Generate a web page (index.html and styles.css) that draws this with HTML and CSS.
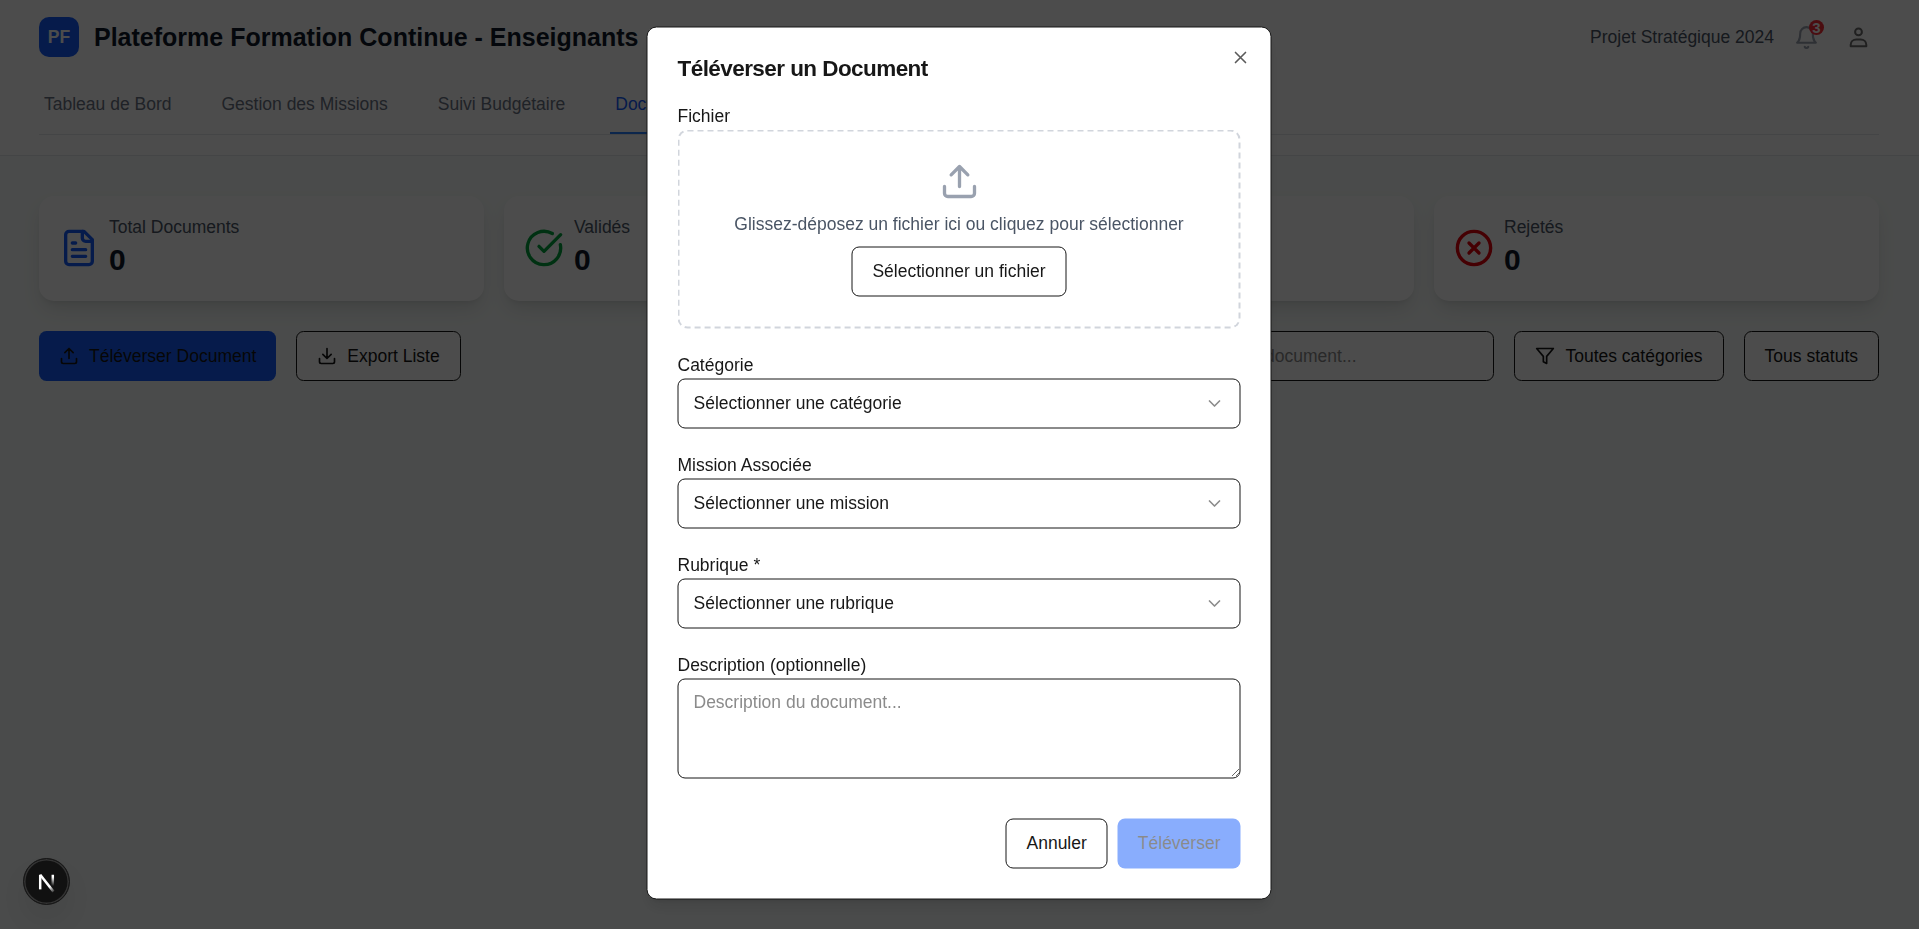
FILE: index.html
```
<!DOCTYPE html>
<html lang="fr">
<head>
<meta charset="utf-8">
<title>Plateforme Formation Continue - Enseignants</title>
<link rel="stylesheet" href="styles.css">
</head>
<body>
<header class="header">
  <div class="header-top">
    <div class="brand">
      <div class="logo">PF</div>
      <h1 class="brand-title">Plateforme Formation Continue - Enseignants</h1>
    </div>
    <div class="header-right">
      <span class="project">Projet Stratégique 2024</span>
      <div class="bell">
        <svg class="icon-md" viewBox="0 0 24 24"><path d="M6 8a6 6 0 0 1 12 0c0 7 3 9 3 9H3s3-2 3-9"/><path d="M10.3 21a1.94 1.94 0 0 0 3.4 0"/></svg>
        <span class="bell-count">3</span>
      </div>
      <div class="user">
        <svg class="icon-md" viewBox="0 0 25 25"><circle cx="12.5" cy="6.9" r="3.4"/><path d="M4.7 21.3v-1.6c0-3 2.5-5.3 5.6-5.3h4.4c3.1 0 5.6 2.3 5.6 5.3v1.6z"/></svg>
      </div>
    </div>
  </div>
  <nav class="tabs">
    <a class="tab">Tableau de Bord</a>
    <a class="tab">Gestion des Missions</a>
    <a class="tab">Suivi Budgétaire</a>
    <a class="tab tab-active">Documents</a>
  </nav>
</header>

<main class="main">
  <section class="stats">
    <div class="card">
      <svg class="icon-lg blue" viewBox="0 0 24 24"><path d="M15 2H6a2 2 0 0 0-2 2v16a2 2 0 0 0 2 2h12a2 2 0 0 0 2-2V7Z"/><path d="M14 2v4a2 2 0 0 0 2 2h4"/><path d="M10 9H8M16 13H8M16 17H8"/></svg>
      <div><p class="card-label">Total Documents</p><p class="card-value">0</p></div>
    </div>
    <div class="card">
      <svg class="icon-lg green" viewBox="0 0 24 24"><path d="M21.801 10A10 10 0 1 1 17 3.335"/><path d="m9 11 3 3L22 4"/></svg>
      <div><p class="card-label">Validés</p><p class="card-value">0</p></div>
    </div>
    <div class="card">
      <svg class="icon-lg orange" viewBox="0 0 24 24"><circle cx="12" cy="12" r="10"/><path d="M12 6v6l4 2"/></svg>
      <div><p class="card-label">En attente</p><p class="card-value">0</p></div>
    </div>
    <div class="card">
      <svg class="icon-lg red" viewBox="0 0 24 24"><circle cx="12" cy="12" r="10"/><path d="m15 9-6 6M9 9l6 6"/></svg>
      <div><p class="card-label">Rejetés</p><p class="card-value">0</p></div>
    </div>
  </section>
  <section class="toolbar">
    <div class="toolbar-group">
      <button class="btn btn-primary"><svg class="icon-sm" viewBox="0 0 24 24"><path d="M21 15v4a2 2 0 0 1-2 2H5a2 2 0 0 1-2-2v-4M17 8l-5-5-5 5M12 3v12"/></svg>Téléverser Document</button>
      <button class="btn"><svg class="icon-sm" viewBox="0 0 24 24"><path d="M21 15v4a2 2 0 0 1-2 2H5a2 2 0 0 1-2-2v-4M7 10l5 5 5-5M12 15V3"/></svg>Export Liste</button>
    </div>
    <div class="toolbar-group">
      <input class="search" placeholder="Rechercher un document...">
      <button class="btn"><svg class="icon-sm" viewBox="0 0 24 24"><path d="M22 3H2l8 9.46V19l4 2v-8.54L22 3z"/></svg>Toutes catégories</button>
      <button class="btn">Tous statuts</button>
    </div>
  </section>
</main>

<div class="overlay">
  <div class="dialog">
    <h2 class="dialog-title">Téléverser un Document</h2>
    <svg class="dialog-close" viewBox="0 0 24 24"><path d="M18 6 6 18M6 6l12 12"/></svg>
    <div class="form">
      <div class="field">
        <label class="label">Fichier</label>
        <div class="dropzone">
          <svg class="icon-lg drop-icon" viewBox="0 0 24 24"><path d="M21 15v4a2 2 0 0 1-2 2H5a2 2 0 0 1-2-2v-4M17 8l-5-5-5 5M12 3v12"/></svg>
          <p class="drop-text">Glissez-déposez un fichier ici ou cliquez pour sélectionner</p>
          <button class="btn">Sélectionner un fichier</button>
        </div>
      </div>
      <div class="field">
        <label class="label">Catégorie</label>
        <div class="select">Sélectionner une catégorie<svg class="icon-sm chevron" viewBox="0 0 24 24"><path d="m6 9 6 6 6-6"/></svg></div>
      </div>
      <div class="field">
        <label class="label">Mission Associée</label>
        <div class="select">Sélectionner une mission<svg class="icon-sm chevron" viewBox="0 0 24 24"><path d="m6 9 6 6 6-6"/></svg></div>
      </div>
      <div class="field">
        <label class="label">Rubrique *</label>
        <div class="select">Sélectionner une rubrique<svg class="icon-sm chevron" viewBox="0 0 24 24"><path d="m6 9 6 6 6-6"/></svg></div>
      </div>
      <div class="field">
        <label class="label">Description (optionnelle)</label>
        <textarea class="textarea" placeholder="Description du document..."></textarea>
      </div>
      <div class="actions">
        <button class="btn">Annuler</button>
        <button class="btn btn-primary btn-disabled">Téléverser</button>
      </div>
    </div>
  </div>
</div>

<div class="dev-badge">
  <svg class="dev-mark" viewBox="0 0 40 40">
    <defs>
      <linearGradient id="stem" gradientUnits="userSpaceOnUse" x1="0" y1="14" x2="0" y2="24"><stop offset="0.2" stop-color="#fff"/><stop offset="1" stop-color="#fff" stop-opacity="0"/></linearGradient>
      <linearGradient id="diag" gradientUnits="userSpaceOnUse" x1="20" y1="21" x2="27" y2="30"><stop offset="0.4" stop-color="#fff"/><stop offset="1" stop-color="#fff" stop-opacity="0"/></linearGradient>
    </defs>
    <path d="M14.4 27V14" stroke="#fff"/>
    <path d="M14.4 14 26.2 29" stroke="url(#diag)"/>
    <path d="M25.6 14V24" stroke="url(#stem)"/>
  </svg>
</div>
</body>
</html>
```
FILE: styles.css
```
html {
  font-size: 20px;
}

* {
  box-sizing: border-box;
  margin: 0;
}

body {
  height: 929px;
  overflow: hidden;
  background: #f8fcfa;
  color: #171717;
  font-family: "Liberation Sans", Arial, sans-serif;
  line-height: 1.5;
}

svg {
  display: block;
  flex: none;
  fill: none;
  stroke: currentColor;
  stroke-width: 2;
  stroke-linecap: round;
  stroke-linejoin: round;
}

.icon-sm { width: 20px; height: 20px; }
.icon-md { width: 25px; height: 25px; }
.icon-lg { width: 40px; height: 40px; }
.blue { color: #155dfc; }
.green { color: #00a63e; }
.orange { color: #d08700; }
.red { color: #e7000b; }

.header {
  height: 156px;
  padding: 0 40px 0 39px;
  background: #fff;
  border-bottom: 1px solid #e5e7eb;
}

.header-top {
  display: flex;
  align-items: center;
  justify-content: space-between;
  height: 74px;
}

.brand {
  display: flex;
  align-items: center;
  gap: 15px;
}

.logo {
  display: grid;
  place-items: center;
  width: 40px;
  height: 40px;
  border-radius: 10px;
  background: #155dfc;
  color: #fff;
  font-size: 17.5px;
  font-weight: 700;
}

.brand-title {
  color: #101828;
  font-size: 25px;
  font-weight: 700;
  line-height: 35px;
}

.header-right {
  display: flex;
  align-items: center;
  gap: 20px;
  padding-right: 8px;
}

.project {
  color: #4a5565;
  font-size: 17.5px;
}

.bell {
  position: relative;
  color: #99a1af;
}

.bell-count {
  position: absolute;
  top: -5px;
  right: -5px;
  display: grid;
  place-items: center;
  width: 15px;
  height: 15px;
  border-radius: 50%;
  background: #fb2c36;
  color: #fff;
  font-size: 15px;
  font-weight: 700;
  line-height: 15px;
}

.user {
  margin-left: 7px;
  color: #6b6b6b;
}

.tabs {
  display: flex;
  gap: 40px;
  height: 61px;
  border-bottom: 1px solid #e5e7eb;
}

.tab {
  height: 60px;
  padding: 0 5px;
  border-bottom: 2px solid transparent;
  color: #6a7282;
  font-size: 17.5px;
  line-height: 60px;
}

.tab-active {
  border-color: #2b7fff;
  color: #155dfc;
}

.main {
  padding: 40px 40px 40px 39px;
}

.stats {
  display: grid;
  grid-template-columns: repeat(4, 1fr);
  gap: 20px;
}

.card {
  display: flex;
  align-items: center;
  gap: 10px;
  height: 105px;
  padding: 19px 20px 21px;
  border-radius: 15px;
  background: #fff;
  box-shadow: 0 10px 20px -3px rgba(0, 0, 0, 0.12), 0 4px 6px -4px rgba(0, 0, 0, 0.1);
}

.card-label {
  color: #4a5565;
  font-size: 17.5px;
  line-height: 25px;
}

.card-value {
  color: #101828;
  font-size: 30px;
  font-weight: 700;
  line-height: 40px;
}

.toolbar {
  display: flex;
  justify-content: space-between;
  margin-top: 30px;
}

.toolbar-group {
  display: flex;
  gap: 20px;
}

.btn {
  display: inline-flex;
  align-items: center;
  justify-content: center;
  gap: 10px;
  height: 50px;
  padding: 0 20px;
  border: 1px solid #171717;
  border-radius: 7.5px;
  background: #fff;
  color: #171717;
  font: 17.5px/25px "Liberation Sans", Arial, sans-serif;
  white-space: nowrap;
}

.btn-primary {
  border: 0;
  background: #155dfc;
}

.btn-disabled {
  opacity: 0.5;
}

.search {
  width: 400px;
  height: 50px;
  padding: 0 15px 0 50px;
  border: 1px solid #171717;
  border-radius: 7.5px;
  background: #fff;
  font: 17.5px/25px "Liberation Sans", Arial, sans-serif;
}

.search::placeholder,
.textarea::placeholder {
  color: #8b8b8b;
}

.overlay {
  position: fixed;
  inset: 0;
  display: flex;
  align-items: center;
  justify-content: center;
  background: rgba(0, 0, 0, 0.7);
}

.dialog {
  position: relative;
  display: flex;
  flex-direction: column;
  gap: 20px;
  width: 625px;
  padding: 30px;
  border: 1px solid #171717;
  border-radius: 10px;
  background: #fff;
  box-shadow: 0 10px 15px -3px rgba(0, 0, 0, 0.1), 0 4px 6px -4px rgba(0, 0, 0, 0.1);
  transform: translate(-0.5px, -1.5px);
}

.dialog-title {
  height: 22.5px;
  font-size: 22.5px;
  font-weight: 700;
  line-height: 21.5px;
  letter-spacing: -0.025em;
}

.dialog-close {
  position: absolute;
  top: 20px;
  right: 20px;
  width: 20px;
  height: 20px;
  opacity: 0.7;
}

.form {
  display: flex;
  flex-direction: column;
  gap: 20px;
}

.label {
  display: block;
  height: 30px;
  padding-top: 2px;
  font-size: 17.5px;
  line-height: 29px;
}

.dropzone {
  display: flex;
  flex-direction: column;
  align-items: center;
  gap: 10px;
  padding: 30px;
  border: 2px dashed #d1d5dc;
  border-radius: 10px;
}

.drop-icon {
  color: #99a1af;
}

.drop-text {
  color: #4a5565;
  font-size: 17.5px;
  line-height: 25px;
}

.dialog .btn {
  padding-bottom: 1px;
}

.select {
  display: flex;
  align-items: center;
  justify-content: space-between;
  height: 50px;
  padding: 0 15px 2px;
  border: 1px solid #171717;
  border-radius: 7.5px;
  font-size: 17.5px;
}

.chevron {
  margin-top: 2px;
  opacity: 0.5;
}

.textarea {
  display: block;
  width: 100%;
  height: 100px;
  padding: 10px 15px;
  border: 1px solid #171717;
  border-radius: 7.5px;
  background: #fff;
  font: 17.5px/25px "Liberation Sans", Arial, sans-serif;
}

.actions {
  display: flex;
  justify-content: flex-end;
  gap: 10px;
  padding-top: 20px;
}

.dev-badge {
  position: fixed;
  left: 23px;
  bottom: 24px;
  display: grid;
  place-items: center;
  width: 47px;
  height: 47px;
  border: 1px solid #171717;
  border-radius: 50%;
  background: #111;
  box-shadow: inset 0 0 0 1.5px #333, 0 16px 32px -8px rgba(0, 0, 0, 0.14);
}

.dev-mark {
  width: 45px;
  height: 45px;
  stroke-width: 2.2;
  stroke-linecap: butt;
}
```
